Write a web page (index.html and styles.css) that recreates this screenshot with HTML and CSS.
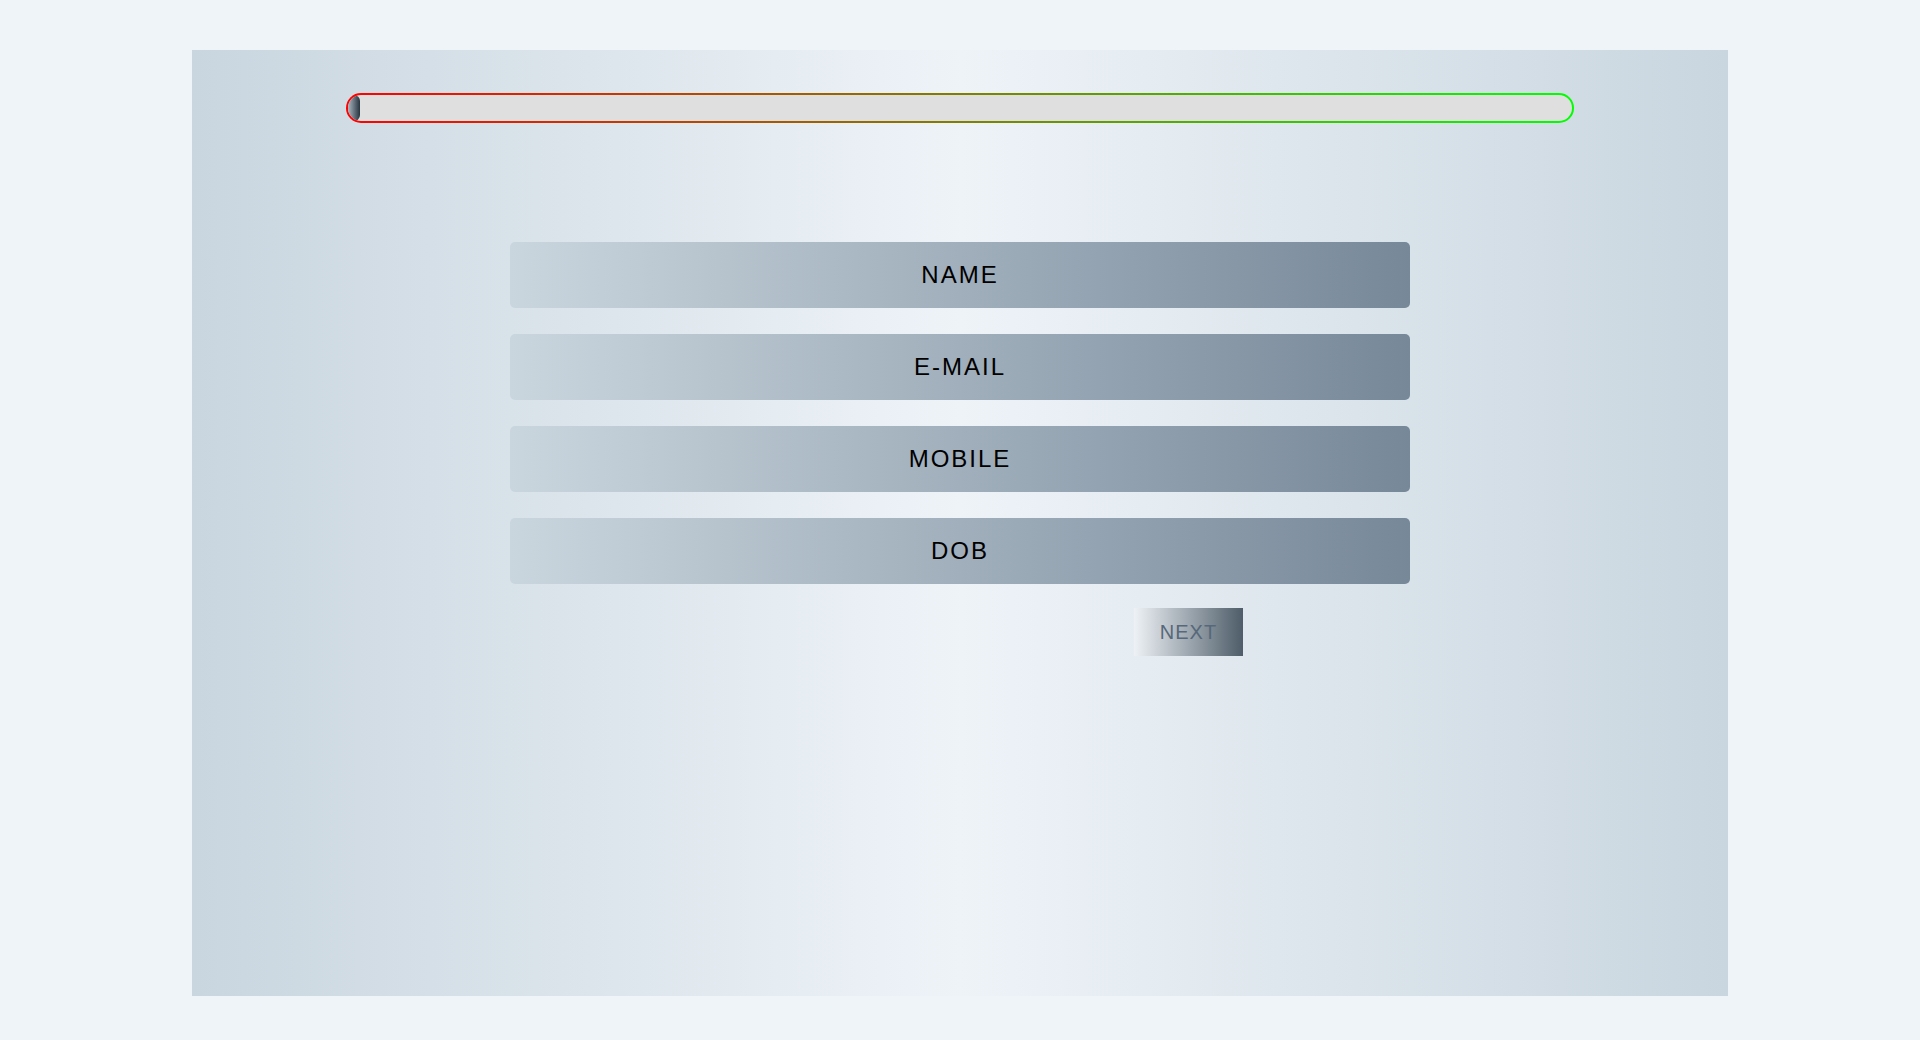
FILE: index.html
```html
<!DOCTYPE html>
<html lang="en">
<head>
<meta charset="utf-8">
<title>Form</title>
<link rel="stylesheet" href="styles.css">
</head>
<body>
<div class="container">
  <div class="progress">
    <div class="progress-fill"></div>
  </div>
  <form class="form">
    <input class="field" type="text" placeholder="NAME">
    <input class="field" type="email" placeholder="E-MAIL">
    <input class="field" type="tel" placeholder="MOBILE">
    <input class="field" type="text" placeholder="DOB">
    <div class="actions">
      <button class="next" type="button">NEXT</button>
    </div>
  </form>
</div>
</body>
</html>
```
FILE: styles.css
```css
html, body {
  margin: 0;
  padding: 0;
}
body {
  background: #eff4f8;
  font-family: "Liberation Sans", Arial, sans-serif;
}
.container {
  width: 1536px;
  height: 946px;
  margin: 50px auto 0;
  background: linear-gradient(to right, #c9d6df 0%, #eef3f8 50%, #c9d6df 100%);
  padding-top: 43px;
  box-sizing: border-box;
}
.progress {
  width: 1228px;
  height: 30px;
  margin: 0 auto;
  box-sizing: border-box;
  border: 2px solid transparent;
  border-radius: 15px;
  background:
    linear-gradient(#dfdfdf, #dfdfdf) padding-box,
    linear-gradient(to right, #ff0000, #00ff00) border-box;
  overflow: hidden;
}
.progress-fill {
  width: 12px;
  height: 100%;
  border-radius: 0 6px 6px 0;
  background: linear-gradient(to right, #aab5bf, #263440);
}
.form {
  width: 900px;
  margin: 119px auto 0;
  display: flex;
  flex-direction: column;
  gap: 26px;
}
.field {
  display: block;
  height: 66px;
  border: none;
  border-radius: 5px;
  outline: none;
  background: linear-gradient(to right, #cad6de, #778899);
  font-family: "Liberation Sans", Arial, sans-serif;
  font-size: 24px;
  letter-spacing: 2px;
  text-align: center;
  color: #000;
  padding: 0;
}
.field::placeholder {
  color: #000;
  opacity: 1;
}
.actions {
  display: flex;
  padding-left: 624px;
  margin-top: -2px;
}
.next {
  width: 109px;
  height: 48px;
  border: none;
  padding: 0;
  background: linear-gradient(to right, #eef2f6, #4e5d69);
  font-family: "Liberation Sans", Arial, sans-serif;
  font-size: 20px;
  letter-spacing: 1px;
  color: #56687a;
  cursor: pointer;
}
```
